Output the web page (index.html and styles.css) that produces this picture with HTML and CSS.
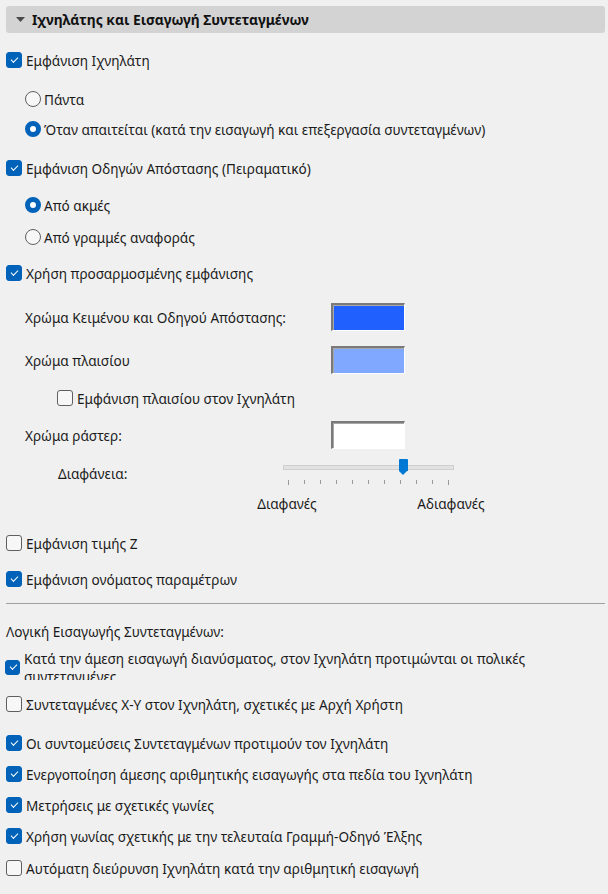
FILE: index.html
```html
<!DOCTYPE html>
<html lang="el">
<head>
<meta charset="utf-8">
<link rel="stylesheet" href="styles.css">
</head>
<body>
<div class="panel">
  <div class="header">
    <svg class="caret" width="9" height="5" viewBox="0 0 9 5"><path d="M0 0 H9 L4.5 5 Z" fill="#4a4a4a"/></svg>
    <span class="title">Ιχνηλάτης και Εισαγωγή Συντεταγμένων</span>
  </div>

  <div class="row m15"><span class="cb on"></span><span>Εμφάνιση Ιχνηλάτη</span></div>
  <div class="row m15 ind"><span class="rb"></span><span>Πάντα</span></div>
  <div class="row m6 ind"><span class="rb on"></span><span>Όταν απαιτείται (κατά την εισαγωγή και επεξεργασία συντεταγμένων)</span></div>
  <div class="row m15"><span class="cb on"></span><span>Εμφάνιση Οδηγών Απόστασης (Πειραματικό)</span></div>
  <div class="row m13 ind"><span class="rb on"></span><span>Από ακμές</span></div>
  <div class="row m8 ind"><span class="rb"></span><span>Από γραμμές αναφοράς</span></div>
  <div class="row m12"><span class="cb on"></span><span>Χρήση προσαρμοσμένης εμφάνισης</span></div>

  <div class="crow m18"><span class="clabel">Χρώμα Κειμένου και Οδηγού Απόστασης:</span><span class="swatch sw-blue"></span></div>
  <div class="crow m15"><span class="clabel">Χρώμα πλαισίου</span><span class="swatch sw-light"></span></div>
  <div class="row m12 ind2"><span class="cb"></span><span>Εμφάνιση πλαισίου στον Ιχνηλάτη</span></div>
  <div class="crow m11"><span class="clabel">Χρώμα ράστερ:</span><span class="swatch sw-white"></span></div>

  <div class="srow">
    <span class="slabel">Διαφάνεια:</span>
    <div class="slider">
      <div class="track"></div>
      <div class="thumb"></div>
      <div class="ticks">
        <i class="long"></i><i></i><i></i><i></i><i></i><i></i><i></i><i></i><i></i><i></i><i class="long"></i>
      </div>
    </div>
  </div>
  <div class="slabels"><span>Διαφανές</span><span>Αδιαφανές</span></div>

  <div class="row m18"><span class="cb"></span><span>Εμφάνιση τιμής Z</span></div>
  <div class="row m12"><span class="cb on"></span><span>Εμφάνιση ονόματος παραμέτρων</span></div>

  <div class="sep"></div>

  <div class="row m15 plain"><span>Λογική Εισαγωγής Συντεταγμένων:</span></div>
  <div class="row2"><span class="cb on cb-small"></span><span class="clip">Κατά την άμεση εισαγωγή διανύσματος, στον Ιχνηλάτη προτιμώνται οι πολικές συντεταγμένες</span></div>
  <div class="row m12"><span class="cb"></span><span>Συντεταγμένες X-Y στον Ιχνηλάτη, σχετικές με Αρχή Χρήστη</span></div>
  <div class="row m15"><span class="cb on"></span><span>Οι συντομεύσεις Συντεταγμένων προτιμούν τον Ιχνηλάτη</span></div>
  <div class="row m7"><span class="cb on"></span><span>Ενεργοποίηση άμεσης αριθμητικής εισαγωγής στα πεδία του Ιχνηλάτη</span></div>
  <div class="row m7"><span class="cb on"></span><span>Μετρήσεις με σχετικές γωνίες</span></div>
  <div class="row m7"><span class="cb on"></span><span>Χρήση γωνίας σχετικής με την τελευταία Γραμμή-Οδηγό Έλξης</span></div>
  <div class="row m8"><span class="cb"></span><span>Αυτόματη διεύρυνση Ιχνηλάτη κατά την αριθμητική εισαγωγή</span></div>
</div>
</body>
</html>
```

FILE: styles.css
```css
html, body {
  margin: 0;
  padding: 0;
  background: #f0f0f0;
}
body {
  font-family: "Noto Sans", "DejaVu Sans", sans-serif;
  font-size: 13.6px;
  color: #1b1b1b;
  width: 608px;
  height: 894px;
  overflow: hidden;
}
.panel {
  padding: 6px 3px 0 6px;
  display: flex;
  flex-direction: column;
}
.header {
  height: 27px;
  background: #d3d3d3;
  border-radius: 3px;
  display: flex;
  align-items: center;
  padding-left: 10px;
  gap: 7px;
}
.title {
  font-weight: 700;
  color: #111;
  font-size: 13.8px;
}
.row {
  height: 24px;
  display: flex;
  align-items: center;
  gap: 4px;
  white-space: nowrap;
}
.row.ind { padding-left: 19px; gap: 3px; }
.row.ind2 { padding-left: 51px; }
.m6 { margin-top: 6px; }
.m7 { margin-top: 7px; }
.m8 { margin-top: 8px; }
.m10 { margin-top: 10px; }
.m11 { margin-top: 11px; }
.m12 { margin-top: 12px; }
.m13 { margin-top: 13px; }
.m15 { margin-top: 15px; }
.m18 { margin-top: 18px; }

.cb {
  width: 16px;
  height: 16px;
  box-sizing: border-box;
  border: 1px solid #5f5f5f;
  border-radius: 3px;
  background: #f7f7f7;
  flex: none;
  position: relative;
}
.cb.on {
  background: #0062b8;
  border-color: #0062b8;
}
.cb.on::after {
  content: "";
  position: absolute;
  left: 3.5px;
  top: 3.5px;
  width: 6px;
  height: 3px;
  border-left: 1.2px solid #fff;
  border-bottom: 1.2px solid #fff;
  transform: rotate(-45deg);
}
.cb-small {
  width: 15px;
  height: 15px;
  margin-left: -1px;
  margin-top: 4px;
}
.rb {
  width: 16px;
  height: 16px;
  box-sizing: border-box;
  border: 1px solid #5f5f5f;
  border-radius: 50%;
  background: #f7f7f7;
  flex: none;
}
.rb.on {
  border: 5px solid #0062b8;
  background: #fff;
}

.crow {
  height: 28px;
  display: flex;
  align-items: center;
  padding-left: 19px;
}
.clabel {
  width: 306px;
}
.swatch {
  width: 74px;
  height: 28px;
  box-sizing: border-box;
  border-top: 2px solid #7a7a7a;
  border-left: 2px solid #7a7a7a;
  border-right: 1px solid #ffffff;
  border-bottom: 1px solid #ffffff;
  box-shadow: inset 1px 1px 0 #a8a8a8;
}
.sw-blue { background: #2060ff; }
.sw-light { background: #80a8ff; }
.sw-white { background: #ffffff; }

.srow {
  margin-top: 7px;
  height: 34px;
  display: flex;
  align-items: center;
  padding-left: 52px;
}
.slabel {
  width: 225px;
}
.slider {
  position: relative;
  width: 171px;
  height: 34px;
}
.track {
  position: absolute;
  left: 0;
  right: 0;
  top: 9px;
  height: 5px;
  box-sizing: border-box;
  background: #e2e2e2;
  border: 1px solid #cfcfcf;
}
.thumb {
  position: absolute;
  left: 116px;
  top: 3px;
  width: 9px;
  height: 12px;
  background: #0078d4;
  border-radius: 1px 1px 0 0;
}
.thumb::after {
  content: "";
  position: absolute;
  left: 0;
  top: 12px;
  border-left: 4.5px solid transparent;
  border-right: 4.5px solid transparent;
  border-top: 4px solid #0078d4;
}
.ticks {
  position: absolute;
  left: 5px;
  top: 24px;
  width: 161px;
  display: flex;
  justify-content: space-between;
}
.ticks i {
  width: 1px;
  height: 4px;
  background: #9a9a9a;
}
.ticks i.long { height: 5px; }

.slabels {
  margin-top: 3px;
  height: 20px;
  display: flex;
  align-items: center;
  padding-left: 231px;
  gap: 64px;
}
.slabels span {
  width: 100px;
  text-align: center;
}

.sep {
  margin-top: 12px;
  height: 1px;
  background: #a0a0a0;
}
.plain { gap: 0; }

.row2 {
  margin-top: 7px;
  height: 30px;
  display: flex;
  align-items: center;
  gap: 4px;
}
.clip {
  height: 30px;
  line-height: 17.5px;
  overflow: hidden;
  width: 560px;
}
```
